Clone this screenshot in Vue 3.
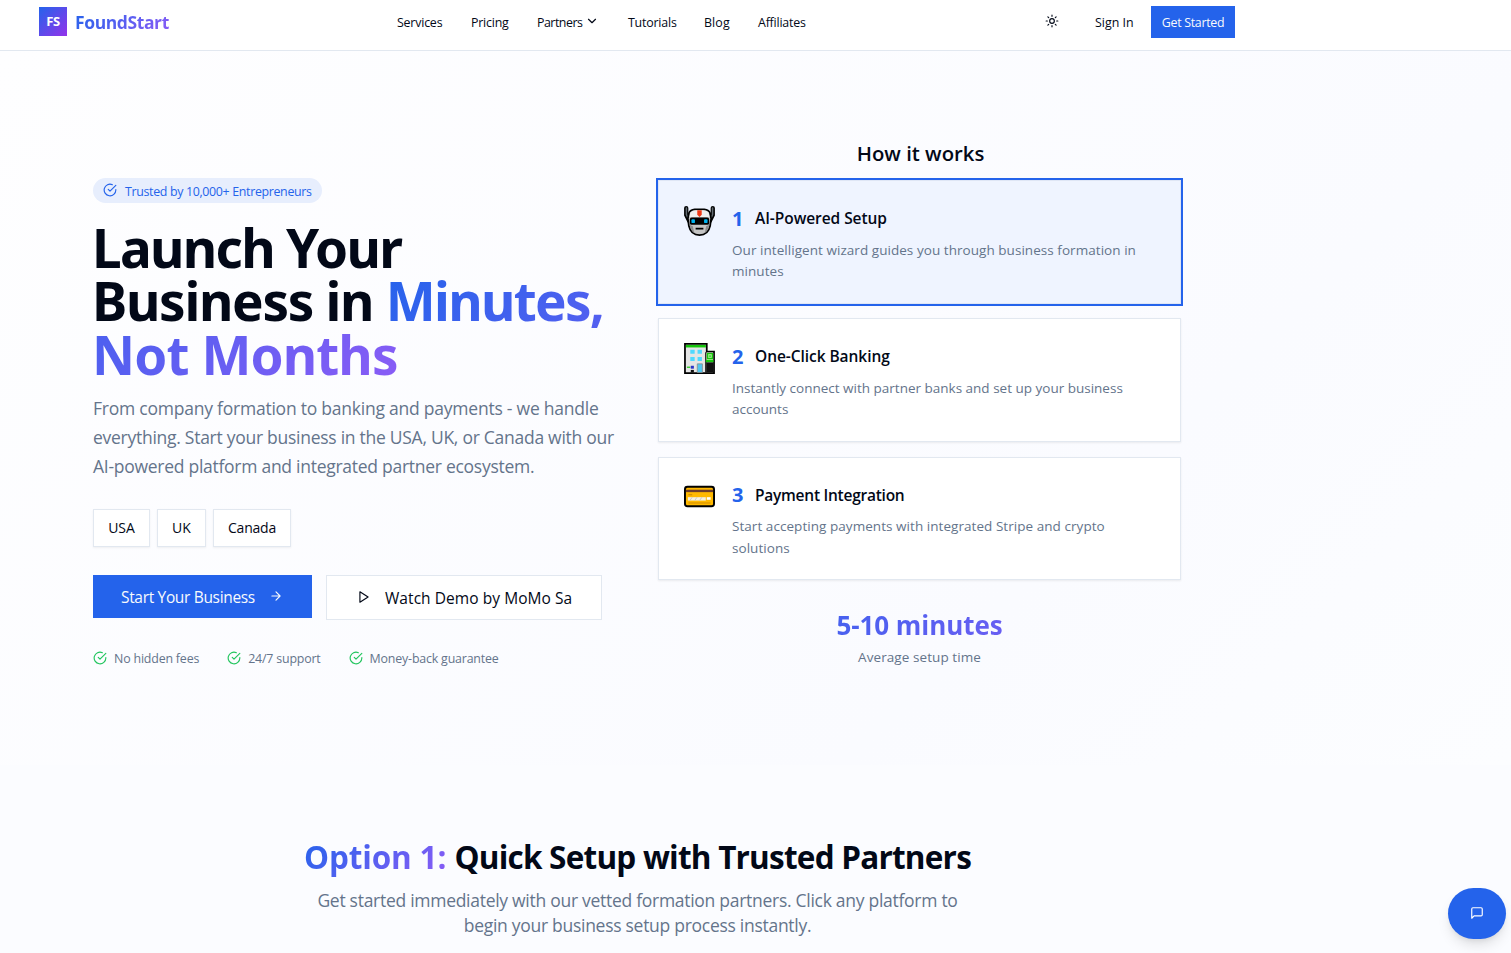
<script setup>
const nav = ['Services', 'Pricing', 'Partners', 'Tutorials', 'Blog', 'Affiliates']
const features = ['No hidden fees', '24/7 support', 'Money-back guarantee']
const steps = [
  { icon: 'robot', title: 'AI-Powered Setup', lines: ['Our intelligent wizard guides you through business formation in', 'minutes'], active: true },
  { icon: 'bank', title: 'One-Click Banking', lines: ['Instantly connect with partner banks and set up your business', 'accounts'] },
  { icon: 'card', title: 'Payment Integration', lines: ['Start accepting payments with integrated Stripe and crypto', 'solutions'] },
]
</script>

<template>
  <div class="page">
    <header class="header">
      <div class="logo">
        <span class="mark">FS</span>
        <span class="brand grad">FoundStart</span>
      </div>
      <nav class="nav">
        <a v-for="item in nav" :key="item">{{ item }}<svg v-if="item === 'Partners'" class="chev" viewBox="0 0 24 24"><path d="m6 9 6 6 6-6" /></svg></a>
      </nav>
      <div class="actions">
        <svg class="sun" viewBox="0 0 24 24"><circle cx="12" cy="12" r="4" /><path d="M12 2v2M12 20v2M4.93 4.93l1.41 1.41M17.66 17.66l1.41 1.41M2 12h2M20 12h2M6.34 17.66l-1.41 1.41M19.07 4.93l-1.41 1.41" /></svg>
        <a class="signin">Sign In</a>
        <a class="cta">Get Started</a>
      </div>
    </header>

    <main class="hero">
      <section class="left">
        <div class="badge">
          <svg viewBox="0 0 24 24"><path d="M22 11.08V12a10 10 0 1 1-5.93-9.14" /><path d="m9 11 3 3L22 4" /></svg>
          <span>Trusted by 10,000+ Entrepreneurs</span>
        </div>
        <h1>
          <span class="l1">Launch Your</span><br>
          <span class="l2">Business in </span><span class="grad"><span class="l3">Minutes,</span><br><span class="l4">Not Months</span></span>
        </h1>
        <p class="lead">
          <span class="first">From company formation to banking and payments - we handle</span><br>
          everything. Start your business in the USA, UK, or Canada with our<br>
          AI-powered platform and integrated partner ecosystem.
        </p>
        <div class="chips"><span>USA</span><span>UK</span><span>Canada</span></div>
        <div class="buttons">
          <a class="start"><span>Start Your Business</span><svg viewBox="0 0 24 24"><path d="M5 12h14M12 5l7 7-7 7" /></svg></a>
          <a class="watch"><svg viewBox="0 0 24 24"><path d="M5 3l14 9-14 9V3z" /></svg><span>Watch Demo by MoMo Sa</span></a>
        </div>
        <ul class="features">
          <li v-for="f in features" :key="f">
            <svg viewBox="0 0 24 24"><path d="M22 11.08V12a10 10 0 1 1-5.93-9.14" /><path d="m9 11 3 3L22 4" /></svg>{{ f }}
          </li>
        </ul>
      </section>

      <section class="right">
        <h2 class="how">How it works</h2>
        <div class="cards">
          <article v-for="(s, i) in steps" :key="s.title" class="card" :class="{ active: s.active }">
            <svg v-if="s.icon === 'robot'" class="emoji" viewBox="0 0 32 32">
              <path d="M2.300 3.200v7l3 6M29.700 3.200v7l-3 6" fill="none" stroke="#000" stroke-width="4.400" stroke-linecap="round" />
              <path d="M2.500 3v7l2.500 5M29.500 3v7l-2.500 5" fill="none" stroke="#606970" stroke-width="1.600" stroke-linecap="round" />
              <path d="M5.200 8Q6.500 5 11 4.500h10Q25.500 5 26.800 8l1.200 6-1 7.500q-2 9.500-11 9.500T5 21.500L4 14Z" fill="#c4c4c4" stroke="#000" stroke-width="1.800" />
              <path d="M6.500 8Q8 5.500 12 5.400h8q4 .1 5.500 2.600l.8 4.500H5.700Z" fill="#efefef" />
              <path d="M5.900 20.500l3.200 1.500 1.500 7Q6.800 26.500 5.900 20.500Z" fill="#8c8c8c" />
              <path d="M26.100 20.500L22.900 22l-1.500 7Q25.200 26.500 26.100 20.500Z" fill="#8c8c8c" />
              <path d="M13.700 5.400h4.600V10L16 12.300 13.700 10Z" fill="#f03a17" />
              <rect x="6" y="13" width="20" height="7.500" rx="2" fill="#000" />
              <rect x="7.700" y="14.700" width="3.600" height="4" rx="1" fill="#00b4f0" />
              <rect x="20.700" y="14.700" width="3.600" height="4" rx="1" fill="#00b4f0" />
              <rect x="12" y="23.500" width="8" height="1.800" fill="#000" />
            </svg>
            <svg v-else-if="s.icon === 'bank'" class="emoji" viewBox="0 0 32 32">
              <path d="M1 1h22.500v8H31v22H1Z" fill="#e5e5e5" stroke="#000" stroke-width="1.800" />
              <path d="M2 2h20.600v2.600H2Z" fill="#16c60c" />
              <path d="M22.600 9.500v21" stroke="#000" stroke-width="1.400" />
              <path d="M6.500 7H11v4H6.500ZM14 7h4.500v4H14ZM6.500 14.500H11v4H6.500ZM14 14.500h4.500v4H14Z" fill="#50d9ff" />
              <path d="M23.300 10h6.800v7.500h-6.800Z" fill="#bdf3a8" />
              <path d="M24.300 11h5v5h-5Z" fill="none" stroke="#16c60c" stroke-width="1.300" />
              <path d="M25.500 13.500h2.500" stroke="#16c60c" stroke-width="1.200" />
              <path d="M22.500 17.500h8v2.500h-8Z" fill="#16c60c" />
              <path d="M23 20h7.500v10.500H23Z" fill="#111" />
              <path d="M13.700 21.500h5.300v9h-5.300Z" fill="#50c8f0" stroke="#888" stroke-width=".8" />
              <path d="M3 25h3.500" stroke="#16c60c" stroke-width="1.200" />
              <path d="M7 23.500h3.200v3H7Z" fill="#2b35c8" />
              <path d="M7 27.800h3.200v2.700H7Z" fill="#111" />
            </svg>
            <svg v-else class="emoji" viewBox="0 0 32 32">
              <rect x="1" y="6" width="30" height="20" rx="2.600" fill="#ffb900" stroke="#000" stroke-width="2" />
              <path d="M2 9h28v2.500H2Z" fill="#6b3c2c" />
              <path d="M4.500 14.200h4" stroke="#d18b00" stroke-width="1.200" />
              <path d="M4 16.700h18.500v3.500H4Z" fill="#f5f0df" />
              <path d="M6 20.200l2.500-3.500M11 20.200l2.500-3.500M16 20.200l2.500-3.500" stroke="#c6c6c6" stroke-width="1" />
              <path d="M23.500 16.700h4v2.700h-4Z" fill="#fff" />
              <path d="M4.500 22.700h23" stroke="#d18b00" stroke-width="1" />
            </svg>
            <div class="body">
              <div class="title"><b>{{ i + 1 }}</b><h3>{{ s.title }}</h3></div>
              <p><template v-for="(l, k) in s.lines" :key="k"><br v-if="k">{{ l }}</template></p>
            </div>
          </article>
        </div>
        <div class="stat"><span>5-10 minutes</span></div>
        <div class="statlabel">Average setup time</div>
      </section>
    </main>

    <section class="option">
      <h2><span class="grad">Option 1:</span> <span class="rest">Quick Setup with Trusted Partners</span></h2>
      <p>Get started immediately with our vetted formation partners. Click any platform to<br>begin your business setup process instantly.</p>
    </section>

    <button class="chat" aria-label="Chat">
      <svg viewBox="0 0 24 24"><path d="M21 15a2 2 0 0 1-2 2H7l-4 4V5a2 2 0 0 1 2-2h14a2 2 0 0 1 2 2z" /></svg>
    </button>
  </div>
</template>

<style>
body { margin: 0; overflow: hidden; }
</style>

<style scoped>
.page { height: 953px; overflow: hidden; font-family: "Open Sans", "Noto Sans", sans-serif; color: #020817; background: #fbfcff; white-space: nowrap; }
h1, h2, h3, p, ul { margin: 0; padding: 0; }
svg { fill: none; stroke: currentColor; stroke-width: 2; stroke-linecap: round; stroke-linejoin: round; flex: none; }
.grad, .stat { color: transparent; background: linear-gradient(135deg, #2463eb, #8b5cf6); background-clip: text; -webkit-background-clip: text; }

.header { box-sizing: border-box; height: 51px; padding: 0 0 6px 39px; display: grid; grid-template-columns: 358px 648px auto; align-items: center; border-bottom: 1px solid #e2e8f0; background: #fff; font-size: 12.4px; letter-spacing: -.2px; }
.logo { display: flex; align-items: center; gap: 8px; }
.mark { width: 28px; height: 29px; margin-top: -2px; display: grid; place-items: center; background: linear-gradient(135deg, #2463eb, #9333ea); color: #fff; font-size: 13px; font-weight: 700; letter-spacing: -.5px; }
.brand { font-size: 17.5px; font-weight: 700; letter-spacing: -.4px; }
.nav { display: grid; grid-template-columns: 74px 66px 91px 76px 54px auto; }
.nav a { display: flex; align-items: center; }
.nav a:nth-child(3) { letter-spacing: -.5px; }
.nav a:nth-child(5) { letter-spacing: .1px; }
.chev { width: 14px; height: 14px; margin: -2px 0 0 3px; }
.actions { display: flex; align-items: center; }
.sun { width: 14px; height: 14px; margin-top: -2px; }
.signin { margin-left: 36px; width: 56px; letter-spacing: 0; }
.cta { width: 84px; height: 32px; display: grid; place-items: center; background: #2463eb; color: #f8fafc; letter-spacing: -.3px; }

.hero { height: 714px; box-sizing: border-box; padding: 88px 0 0 93px; display: grid; grid-template-columns: 565px 523px; align-items: start; background: linear-gradient(135deg, #fefeff, #fafbff 70%, #fcfdff); }
.left { padding-top: 39px; }
.badge { width: 229px; height: 25px; box-sizing: border-box; padding-left: 10px; display: flex; align-items: center; gap: 8px; border-radius: 13px; background: #e7eefd; color: #2463eb; font-size: 12.4px; letter-spacing: -.33px; }
.badge span { padding-top: 1px; }
.badge svg { width: 14px; height: 14px; margin-top: -1px; }
h1 { margin: 17.600px 0 0 -1px; font: 700 53px/53.700px "Noto Sans", "Open Sans", sans-serif; }
.l1 { letter-spacing: -1.680px; }
.l2 { letter-spacing: -1.300px; }
.l3 { letter-spacing: -1.700px; }
.l4 { letter-spacing: -.9px; }
.lead { margin-top: 12px; font-size: 17.500px; line-height: 29px; letter-spacing: -.27px; color: #64748b; }
.first { letter-spacing: -.23px; }
.chips { margin-top: 28px; display: flex; gap: 7px; font-size: 14px; }
.chips span { box-sizing: border-box; height: 38px; width: 57px; display: grid; place-items: center; background: #fff; border: 1px solid #e2e8f0; box-shadow: 0 1px 2px rgba(0, 0, 0, .06); }
.chips span:nth-child(2) { width: 49px; }
.chips span:nth-child(3) { width: 78px; letter-spacing: -.2px; }
.buttons { margin-top: 28px; display: flex; gap: 14px; align-items: flex-start; font-size: 15.500px; }
.buttons a { box-sizing: border-box; display: flex; align-items: center; }
.buttons span { padding-top: 2px; }
.start { width: 219px; height: 43px; padding-left: 28px; gap: 14px; background: #2463eb; color: #f8fafc; letter-spacing: -.33px; }
.watch { width: 276px; height: 45px; padding-left: 30px; gap: 14px; background: #fff; border: 1px solid #e2e8f0; letter-spacing: .06px; }
.buttons svg { width: 14px; height: 14px; }
.features { margin-top: 28px; display: flex; gap: 28px; list-style: none; font-size: 12.400px; line-height: 21px; letter-spacing: -.18px; color: #64748b; }
.features li { display: flex; align-items: center; gap: 7px; }
.features svg { width: 14px; height: 14px; color: #22c55e; }

.right { text-align: center; }
.how { font-size: 20.300px; line-height: 28px; font-weight: 600; padding-left: 2px; }
.cards { margin-top: 13px; display: grid; gap: 14.400px; text-align: left; }
.card { box-sizing: border-box; height: 124px; padding: 23px 0 0 25px; display: flex; gap: 17px; background: #fff; border: 1px solid #e2e8f0; box-shadow: 0 1px 2px rgba(0, 0, 0, .07); }
.card.active { background: #eff4ff; border-color: #dfe6f5; box-shadow: 0 0 0 2px #2463eb; }
.card:nth-child(3) { height: 123px; }
.emoji { width: 31px; height: 31px; margin-top: 1px; stroke: none; stroke-width: 1; stroke-linecap: butt; stroke-linejoin: miter; }
.card:nth-child(3) .emoji { margin-top: 0; }
.title { display: flex; align-items: center; height: 28px; }
.title b { width: 23px; font-size: 20px; color: #2463eb; }
h3 { font-size: 15.500px; font-weight: 600; letter-spacing: -.06px; }
.card:nth-child(3) h3 { letter-spacing: -.25px; }
.card p { margin-top: 7.500px; font-size: 13.500px; line-height: 21.500px; letter-spacing: .05px; color: #64748b; }
.card:nth-child(2) p { letter-spacing: 0; }
.stat { margin-top: 27px; font-size: 26px; line-height: 36px; font-weight: 700; letter-spacing: -.06px; }
.statlabel { margin-top: 4px; font-size: 13.500px; line-height: 20px; letter-spacing: .08px; color: #64748b; }

.option { width: 1275px; padding-top: 71.500px; text-align: center; }
.option h2 { font-size: 31.500px; line-height: 40px; font-weight: 700; }
.option .grad { letter-spacing: -.15px; }
.rest { letter-spacing: -.78px; }
.option p { margin-top: 11px; font-size: 17.500px; line-height: 25.200px; letter-spacing: -.28px; color: #64748b; }

.chat { position: absolute; left: 1448px; top: 888px; width: 58px; height: 51px; padding: 0; border: 0; border-radius: 26px; display: grid; place-items: center; background: #2463eb; color: #fff; box-shadow: 0 8px 14px -3px rgba(0, 0, 0, .13), 0 3px 6px -3px rgba(0, 0, 0, .1); }
.chat svg { width: 14px; height: 14px; margin-top: -1px; }
</style>
